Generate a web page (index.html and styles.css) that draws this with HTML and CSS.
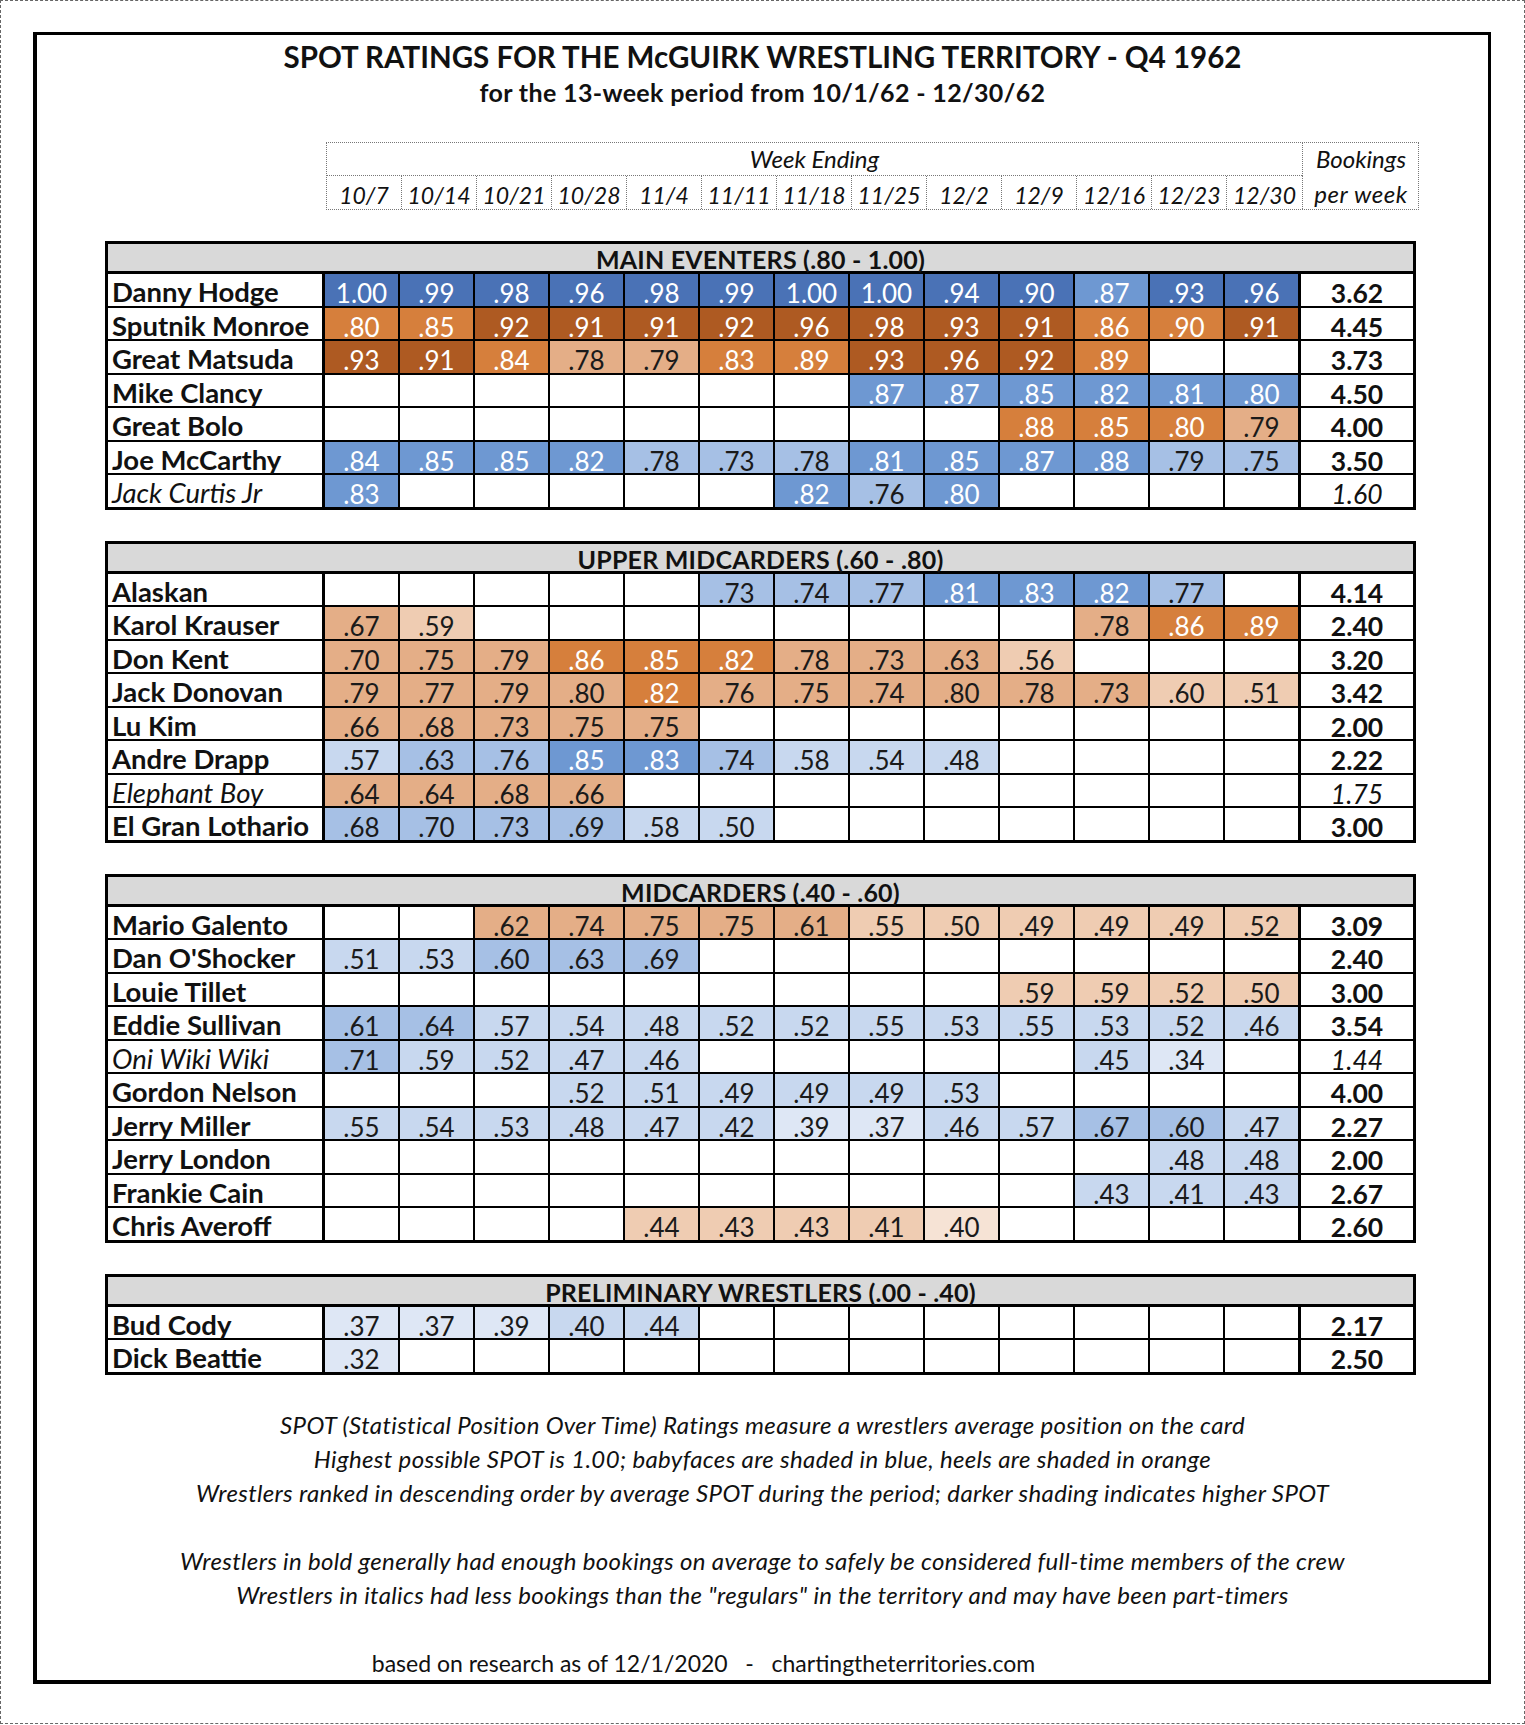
FILE: index.html
```html
<!DOCTYPE html>
<html>
<head>
<meta charset="utf-8">
<title>SPOT Ratings - McGuirk Territory Q4 1962</title>
<link rel="stylesheet" href="styles.css">
</head>
<body>
<div class="page">
<div class="frame">
  <h1 class="title">SPOT RATINGS FOR THE McGUIRK WRESTLING TERRITORY - Q4 1962</h1>
  <div class="subtitle">for the 13-week period from 10/1/62 - 12/30/62</div>

  <div class="weeks">
    <div class="wk-title">Week Ending</div>
    <div class="bk-head">Bookings</div>
    <div class="wk">10/7</div><div class="wk">10/14</div><div class="wk">10/21</div><div class="wk">10/28</div><div class="wk">11/4</div><div class="wk">11/11</div><div class="wk">11/18</div><div class="wk">11/25</div><div class="wk">12/2</div><div class="wk">12/9</div><div class="wk">12/16</div><div class="wk">12/23</div><div class="wk">12/30</div>
    <div class="bk-head2">per week</div>
  </div>

  <div class="sec">
    <div class="sec-head">MAIN EVENTERS (.80 - 1.00)</div>

    <div class="n">Danny Hodge</div>
    <div class="c b1">1.00</div><div class="c b1">.99</div><div class="c b1">.98</div><div class="c b1">.96</div><div class="c b1">.98</div><div class="c b1">.99</div><div class="c b1">1.00</div><div class="c b1">1.00</div><div class="c b1">.94</div><div class="c b1">.90</div><div class="c b2">.87</div><div class="c b1">.93</div><div class="c b1">.96</div>
    <div class="bk">3.62</div>

    <div class="n">Sputnik Monroe</div>
    <div class="c o2">.80</div><div class="c o2">.85</div><div class="c o1">.92</div><div class="c o1">.91</div><div class="c o1">.91</div><div class="c o1">.92</div><div class="c o1">.96</div><div class="c o1">.98</div><div class="c o1">.93</div><div class="c o1">.91</div><div class="c o2">.86</div><div class="c o2">.90</div><div class="c o1">.91</div>
    <div class="bk">4.45</div>

    <div class="n">Great Matsuda</div>
    <div class="c o1">.93</div><div class="c o1">.91</div><div class="c o2">.84</div><div class="c o3">.78</div><div class="c o3">.79</div><div class="c o2">.83</div><div class="c o2">.89</div><div class="c o1">.93</div><div class="c o1">.96</div><div class="c o1">.92</div><div class="c o2">.89</div><div class="c"></div><div class="c"></div>
    <div class="bk">3.73</div>

    <div class="n">Mike Clancy</div>
    <div class="c"></div><div class="c"></div><div class="c"></div><div class="c"></div><div class="c"></div><div class="c"></div><div class="c"></div><div class="c b2">.87</div><div class="c b2">.87</div><div class="c b2">.85</div><div class="c b2">.82</div><div class="c b2">.81</div><div class="c b2">.80</div>
    <div class="bk">4.50</div>

    <div class="n">Great Bolo</div>
    <div class="c"></div><div class="c"></div><div class="c"></div><div class="c"></div><div class="c"></div><div class="c"></div><div class="c"></div><div class="c"></div><div class="c"></div><div class="c o2">.88</div><div class="c o2">.85</div><div class="c o2">.80</div><div class="c o3">.79</div>
    <div class="bk">4.00</div>

    <div class="n">Joe McCarthy</div>
    <div class="c b2">.84</div><div class="c b2">.85</div><div class="c b2">.85</div><div class="c b2">.82</div><div class="c b3">.78</div><div class="c b3">.73</div><div class="c b3">.78</div><div class="c b2">.81</div><div class="c b2">.85</div><div class="c b2">.87</div><div class="c b2">.88</div><div class="c b3">.79</div><div class="c b3">.75</div>
    <div class="bk">3.50</div>

    <div class="n it">Jack Curtis Jr</div>
    <div class="c b2">.83</div><div class="c"></div><div class="c"></div><div class="c"></div><div class="c"></div><div class="c"></div><div class="c b2">.82</div><div class="c b3">.76</div><div class="c b2">.80</div><div class="c"></div><div class="c"></div><div class="c"></div><div class="c"></div>
    <div class="bk it">1.60</div>
  </div>

  <div class="sec">
    <div class="sec-head">UPPER MIDCARDERS (.60 - .80)</div>

    <div class="n">Alaskan</div>
    <div class="c"></div><div class="c"></div><div class="c"></div><div class="c"></div><div class="c"></div><div class="c b3">.73</div><div class="c b3">.74</div><div class="c b3">.77</div><div class="c b2">.81</div><div class="c b2">.83</div><div class="c b2">.82</div><div class="c b3">.77</div><div class="c"></div>
    <div class="bk">4.14</div>

    <div class="n">Karol Krauser</div>
    <div class="c o3">.67</div><div class="c o4">.59</div><div class="c"></div><div class="c"></div><div class="c"></div><div class="c"></div><div class="c"></div><div class="c"></div><div class="c"></div><div class="c"></div><div class="c o3">.78</div><div class="c o2">.86</div><div class="c o2">.89</div>
    <div class="bk">2.40</div>

    <div class="n">Don Kent</div>
    <div class="c o3">.70</div><div class="c o3">.75</div><div class="c o3">.79</div><div class="c o2">.86</div><div class="c o2">.85</div><div class="c o2">.82</div><div class="c o3">.78</div><div class="c o3">.73</div><div class="c o3">.63</div><div class="c o4">.56</div><div class="c"></div><div class="c"></div><div class="c"></div>
    <div class="bk">3.20</div>

    <div class="n">Jack Donovan</div>
    <div class="c o3">.79</div><div class="c o3">.77</div><div class="c o3">.79</div><div class="c o3">.80</div><div class="c o2">.82</div><div class="c o3">.76</div><div class="c o3">.75</div><div class="c o3">.74</div><div class="c o3">.80</div><div class="c o3">.78</div><div class="c o3">.73</div><div class="c o4">.60</div><div class="c o4">.51</div>
    <div class="bk">3.42</div>

    <div class="n">Lu Kim</div>
    <div class="c o3">.66</div><div class="c o3">.68</div><div class="c o3">.73</div><div class="c o3">.75</div><div class="c o3">.75</div><div class="c"></div><div class="c"></div><div class="c"></div><div class="c"></div><div class="c"></div><div class="c"></div><div class="c"></div><div class="c"></div>
    <div class="bk">2.00</div>

    <div class="n">Andre Drapp</div>
    <div class="c b4">.57</div><div class="c b3">.63</div><div class="c b3">.76</div><div class="c b2">.85</div><div class="c b2">.83</div><div class="c b3">.74</div><div class="c b4">.58</div><div class="c b4">.54</div><div class="c b4">.48</div><div class="c"></div><div class="c"></div><div class="c"></div><div class="c"></div>
    <div class="bk">2.22</div>

    <div class="n it">Elephant Boy</div>
    <div class="c o3">.64</div><div class="c o3">.64</div><div class="c o3">.68</div><div class="c o3">.66</div><div class="c"></div><div class="c"></div><div class="c"></div><div class="c"></div><div class="c"></div><div class="c"></div><div class="c"></div><div class="c"></div><div class="c"></div>
    <div class="bk it">1.75</div>

    <div class="n">El Gran Lothario</div>
    <div class="c b3">.68</div><div class="c b3">.70</div><div class="c b3">.73</div><div class="c b3">.69</div><div class="c b4">.58</div><div class="c b4">.50</div><div class="c"></div><div class="c"></div><div class="c"></div><div class="c"></div><div class="c"></div><div class="c"></div><div class="c"></div>
    <div class="bk">3.00</div>
  </div>

  <div class="sec">
    <div class="sec-head">MIDCARDERS (.40 - .60)</div>

    <div class="n">Mario Galento</div>
    <div class="c"></div><div class="c"></div><div class="c o3">.62</div><div class="c o3">.74</div><div class="c o3">.75</div><div class="c o3">.75</div><div class="c o3">.61</div><div class="c o4">.55</div><div class="c o4">.50</div><div class="c o4">.49</div><div class="c o4">.49</div><div class="c o4">.49</div><div class="c o4">.52</div>
    <div class="bk">3.09</div>

    <div class="n">Dan O'Shocker</div>
    <div class="c b4">.51</div><div class="c b4">.53</div><div class="c b3">.60</div><div class="c b3">.63</div><div class="c b3">.69</div><div class="c"></div><div class="c"></div><div class="c"></div><div class="c"></div><div class="c"></div><div class="c"></div><div class="c"></div><div class="c"></div>
    <div class="bk">2.40</div>

    <div class="n">Louie Tillet</div>
    <div class="c"></div><div class="c"></div><div class="c"></div><div class="c"></div><div class="c"></div><div class="c"></div><div class="c"></div><div class="c"></div><div class="c"></div><div class="c o4">.59</div><div class="c o4">.59</div><div class="c o4">.52</div><div class="c o4">.50</div>
    <div class="bk">3.00</div>

    <div class="n">Eddie Sullivan</div>
    <div class="c b3">.61</div><div class="c b3">.64</div><div class="c b4">.57</div><div class="c b4">.54</div><div class="c b4">.48</div><div class="c b4">.52</div><div class="c b4">.52</div><div class="c b4">.55</div><div class="c b4">.53</div><div class="c b4">.55</div><div class="c b4">.53</div><div class="c b4">.52</div><div class="c b4">.46</div>
    <div class="bk">3.54</div>

    <div class="n it">Oni Wiki Wiki</div>
    <div class="c b3">.71</div><div class="c b4">.59</div><div class="c b4">.52</div><div class="c b4">.47</div><div class="c b4">.46</div><div class="c"></div><div class="c"></div><div class="c"></div><div class="c"></div><div class="c"></div><div class="c b4">.45</div><div class="c b5">.34</div><div class="c"></div>
    <div class="bk it">1.44</div>

    <div class="n">Gordon Nelson</div>
    <div class="c"></div><div class="c"></div><div class="c"></div><div class="c b4">.52</div><div class="c b4">.51</div><div class="c b4">.49</div><div class="c b4">.49</div><div class="c b4">.49</div><div class="c b4">.53</div><div class="c"></div><div class="c"></div><div class="c"></div><div class="c"></div>
    <div class="bk">4.00</div>

    <div class="n">Jerry Miller</div>
    <div class="c b4">.55</div><div class="c b4">.54</div><div class="c b4">.53</div><div class="c b4">.48</div><div class="c b4">.47</div><div class="c b4">.42</div><div class="c b5">.39</div><div class="c b5">.37</div><div class="c b4">.46</div><div class="c b4">.57</div><div class="c b3">.67</div><div class="c b3">.60</div><div class="c b4">.47</div>
    <div class="bk">2.27</div>

    <div class="n">Jerry London</div>
    <div class="c"></div><div class="c"></div><div class="c"></div><div class="c"></div><div class="c"></div><div class="c"></div><div class="c"></div><div class="c"></div><div class="c"></div><div class="c"></div><div class="c"></div><div class="c b4">.48</div><div class="c b4">.48</div>
    <div class="bk">2.00</div>

    <div class="n">Frankie Cain</div>
    <div class="c"></div><div class="c"></div><div class="c"></div><div class="c"></div><div class="c"></div><div class="c"></div><div class="c"></div><div class="c"></div><div class="c"></div><div class="c"></div><div class="c b4">.43</div><div class="c b4">.41</div><div class="c b4">.43</div>
    <div class="bk">2.67</div>

    <div class="n">Chris Averoff</div>
    <div class="c"></div><div class="c"></div><div class="c"></div><div class="c"></div><div class="c o4">.44</div><div class="c o4">.43</div><div class="c o4">.43</div><div class="c o4">.41</div><div class="c o5">.40</div><div class="c"></div><div class="c"></div><div class="c"></div><div class="c"></div>
    <div class="bk">2.60</div>
  </div>

  <div class="sec">
    <div class="sec-head">PRELIMINARY WRESTLERS (.00 - .40)</div>

    <div class="n">Bud Cody</div>
    <div class="c b5">.37</div><div class="c b5">.37</div><div class="c b5">.39</div><div class="c b4">.40</div><div class="c b4">.44</div><div class="c"></div><div class="c"></div><div class="c"></div><div class="c"></div><div class="c"></div><div class="c"></div><div class="c"></div><div class="c"></div>
    <div class="bk">2.17</div>

    <div class="n">Dick Beattie</div>
    <div class="c b5">.32</div><div class="c"></div><div class="c"></div><div class="c"></div><div class="c"></div><div class="c"></div><div class="c"></div><div class="c"></div><div class="c"></div><div class="c"></div><div class="c"></div><div class="c"></div><div class="c"></div>
    <div class="bk">2.50</div>
  </div>

  <div class="notes">
    <p>SPOT (Statistical Position Over Time) Ratings measure a wrestlers average position on the card</p>
    <p>Highest possible SPOT is 1.00; babyfaces are shaded in blue, heels are shaded in orange</p>
    <p>Wrestlers ranked in descending order by average SPOT during the period; darker shading indicates higher SPOT</p>
    <p class="blank"></p>
    <p>Wrestlers in bold generally had enough bookings on average to safely be considered full-time members of the crew</p>
    <p>Wrestlers in italics had less bookings than the "regulars" in the territory and may have been part-timers</p>
    <p class="blank"></p>
    <p class="credit">based on research as of 12/1/2020&nbsp;&nbsp; -&nbsp;&nbsp; chartingtheterritories.com</p>
  </div>
</div>
</div>
</body>
</html>
```

FILE: styles.css
```css
* { box-sizing: border-box; }

html, body {
  margin: 0;
  padding: 0;
  background: #fff;
}

body {
  font-family: Lato, "Open Sans", "Liberation Sans", sans-serif;
  color: #111;
}

.page {
  width: 1525px;
  height: 1724px;
  border: 1px dashed #666;
  padding: 31px 0 0 32px;
}

.frame {
  width: 1458px;
  height: 1652px;
  border: 3px solid #000;
  border-left-width: 4px;
  border-bottom-width: 4px;
  padding-top: 5px;
}

.title {
  margin: 0;
  font-size: 29.5px;
  font-weight: 700;
  line-height: 34px;
  text-align: center;
}

.subtitle {
  font-size: 25px;
  font-weight: 700;
  letter-spacing: 0.35px;
  line-height: 36px;
  text-align: center;
}

/* week ending header */
.weeks {
  margin: 32px 0 0 289px;
  width: 1093px;
  display: grid;
  grid-template-columns: repeat(13, 75px) 117px;
  grid-template-rows: 33px 33px;
  border: 1px dotted #777;
  font-style: italic;
  font-size: 24px;
  text-align: center;
}

.wk-title {
  grid-column: 1 / 14;
  border-bottom: 1px dotted #777;
  line-height: 32px;
}

.bk-head {
  grid-column: 14;
  grid-row: 1;
  border-left: 1px dotted #777;
  line-height: 32px;
}

.wk {
  border-right: 1px dotted #777;
  font-size: 23px;
  line-height: 32px;
  padding-top: 3px;
}

.wk:nth-child(15) { border-right: none; }

.bk-head2 {
  border-left: 1px dotted #777;
  letter-spacing: 0.6px;
  line-height: 32px;
  padding-top: 2px;
  white-space: nowrap;
}

/* rating sections */
.sec {
  margin: 31px 0 0 68px;
  width: 1311px;
  display: grid;
  grid-template-columns: 215px repeat(13, 73px) 113px;
  grid-template-rows: 28px;
  grid-auto-rows: 31.5px;
  gap: 2px;
  background: #000;
  border: 3px solid #000;
}

.sec-head {
  grid-column: 1 / -1;
  background: #d9d9d9;
  border-bottom: 1px solid #000;
  font-size: 25px;
  font-weight: 700;
  letter-spacing: 0.2px;
  line-height: 24px;
  padding-top: 3px;
  text-align: center;
}

.n {
  background: #fff;
  border-right: 1px solid #000;
  font-size: 27.5px;
  font-weight: 700;
  line-height: 28px;
  padding: 4px 0 0 4px;
  white-space: nowrap;
}

.n.it {
  font-weight: 400;
  font-style: italic;
}

.c {
  background: #fff;
  font-size: 26px;
  line-height: 28px;
  padding-top: 5px;
  text-align: center;
  color: #1a1a1a;
}

.bk {
  background: #fff;
  border-left: 1px solid #000;
  font-size: 26.5px;
  font-weight: 700;
  line-height: 28px;
  padding-top: 5px;
  text-align: center;
}

.bk.it {
  font-weight: 400;
  font-style: italic;
}

.b1 { background: #4a72b6; color: #fff; }
.b2 { background: #6e98d2; color: #fff; }
.b3 { background: #a6c0e5; }
.b4 { background: #c8d8ef; }
.b5 { background: #dee7f5; }

.o1 { background: #ae5a22; color: #fff; }
.o2 { background: #d67f3c; color: #fff; }
.o3 { background: #e4ae87; }
.o4 { background: #efccb2; }
.o5 { background: #f6e3d5; }

/* notes */
.notes {
  margin-top: 33px;
  font-size: 24px;
  font-style: italic;
  letter-spacing: 0.35px;
  text-align: center;
}

.notes p {
  margin: 0;
  height: 34px;
  line-height: 34px;
  white-space: nowrap;
}

.notes .credit {
  font-size: 23px;
  font-style: normal;
  letter-spacing: 0;
  padding-right: 118px;
}
```
